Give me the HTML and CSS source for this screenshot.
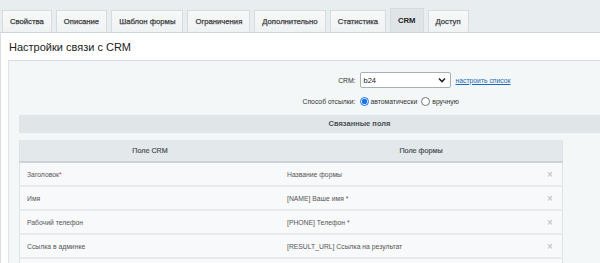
FILE: index.html
```html
<!DOCTYPE html>
<html lang="ru">
<head>
<meta charset="utf-8">
<title>Настройки связи с CRM</title>
<link rel="stylesheet" href="styles.css">
</head>
<body>
<div class="page">
  <div class="tabs">
    <div class="tab">Свойства</div>
    <div class="tab">Описание</div>
    <div class="tab">Шаблон формы</div>
    <div class="tab">Ограничения</div>
    <div class="tab">Дополнительно</div>
    <div class="tab">Статистика</div>
    <div class="tab active">CRM</div>
    <div class="tab">Доступ</div>
  </div>
  <div class="panel">
    <div class="title">Настройки связи с CRM</div>
    <div class="inner">
      <div class="form">
        <div class="label">CRM:</div>
        <div class="field">
          <div class="select"><span>b24</span>
            <svg class="chev" width="8" height="6" viewBox="0 0 8 6"><path d="M1 1.5 L4 4.5 L7 1.5" fill="none" stroke="#222" stroke-width="1.6"/></svg>
          </div>
          <a class="link" href="#">настроить список</a>
        </div>
        <div class="label">Способ отсылки:</div>
        <div class="field radios">
          <label class="radio"><input type="radio" name="m" checked>автоматически</label>
          <label class="radio"><input type="radio" name="m">вручную</label>
        </div>
      </div>
      <div class="section">Связанные поля</div>
      <table class="map">
        <thead>
          <tr><th class="c1">Поле CRM</th><th colspan="2">Поле формы</th></tr>
        </thead>
        <tbody>
          <tr><td class="c1">Заголовок<span class="req">*</span></td><td class="c2">Название формы</td><td class="del">×</td></tr>
          <tr><td class="c1">Имя</td><td class="c2">[NAME] Ваше имя *</td><td class="del">×</td></tr>
          <tr><td class="c1">Рабочий телефон</td><td class="c2">[PHONE] Телефон *</td><td class="del">×</td></tr>
          <tr><td class="c1">Ссылка в админке</td><td class="c2">[RESULT_URL] Ссылка на результат</td><td class="del">×</td></tr>
          <tr><td class="c1">&nbsp;</td><td class="c2"></td><td class="del"></td></tr>
        </tbody>
      </table>
    </div>
  </div>
</div>
</body>
</html>
```
FILE: styles.css
```css
html, body {
  margin: 0;
  padding: 0;
  overflow: hidden;
  background: #e8edef;
  font-family: "Liberation Sans", Arial, sans-serif;
}
.page {
  width: 710px;
}
.tabs {
  display: flex;
  align-items: flex-end;
  gap: 4px;
  padding: 9px 0 0 2px;
  height: 23px;
}
.tab {
  height: 22px;
  line-height: 22px;
  padding: 0 7px;
  border: 1px solid #d5dbde;
  border-bottom: none;
  background: linear-gradient(#f8f9f9, #eff2f3);
  font-size: 7.7px;
  color: #3c4043;
  -webkit-text-stroke: 0.25px #3c4043;
  box-sizing: border-box;
}
.tab.active {
  height: 24px;
  line-height: 24px;
  background: #dfe5e7;
  color: #222;
  font-weight: bold;
  -webkit-text-stroke: 0;
}
.panel {
  background: #ffffff;
  border-top: 1px solid #cdd4d7;
  border-left: 1px solid #d9dfe2;
}
.title {
  height: 27px;
  line-height: 28px;
  padding-left: 8px;
  font-size: 11px;
  color: #222;
}
.inner {
  margin-left: 7px;
  background: #f4f7f8;
  border-top: 1px solid #d6dde0;
  border-left: 1px solid #dde3e6;
  padding: 11px 10px 0 10px;
  height: 220px;
}
.form {
  display: grid;
  grid-template-columns: 1fr 1fr;
  row-gap: 5px;
  align-items: center;
  font-size: 6.8px;
  color: #333;
}
.label {
  text-align: right;
  padding-right: 4px;
}
.field {
  display: flex;
  align-items: center;
  gap: 5px;
}
.select {
  width: 91px;
  height: 16px;
  box-sizing: border-box;
  border: 1px solid #a9b0b4;
  border-radius: 2px;
  background: #fff;
  display: flex;
  align-items: center;
  justify-content: space-between;
  padding: 0 4px 0 3px;
  font-size: 7.5px;
  color: #222;
}
.link {
  color: #2168b8;
  font-size: 6.8px;
  text-decoration: underline;
}
.radios {
  gap: 4px;
  height: 16px;
}
.radio {
  display: flex;
  align-items: center;
  gap: 2px;
}
.radio input {
  margin: 0;
  width: 9px;
  height: 9px;
  accent-color: #1a73e8;
}
.section {
  margin-top: 6px;
  height: 18px;
  line-height: 18px;
  background: #e0e6e8;
  text-align: center;
  font-size: 7.5px;
  font-weight: bold;
  color: #4a4f52;
}
.map {
  margin-top: 7px;
  width: 544px;
  border-collapse: collapse;
  font-size: 6.8px;
  color: #555;
  background: #f8f9fa;
  border-left: 1px solid #dde3e6;
  border-right: 1px solid #dde3e6;
}
.map th {
  height: 21px;
  background: #e3e8ea;
  border-bottom: 2px solid #ccd3d7;
  font-weight: normal;
  -webkit-text-stroke: 0.2px #4f5457;
  color: #4f5457;
  font-size: 7.2px;
  padding: 0;
}
.map th.c1 {
  width: 260px;
}
.map td {
  height: 22px;
  border-bottom: 2px solid #e6eaec;
  padding: 0 7px;
}
.map td.c2 {
  padding-left: 7px;
}
.map td.del {
  width: 8px;
  text-align: center;
  color: #b0b5b8;
  font-size: 10px;
  padding: 0 8px 0 4px;
}
.req {
  color: #d0454c;
}
```
